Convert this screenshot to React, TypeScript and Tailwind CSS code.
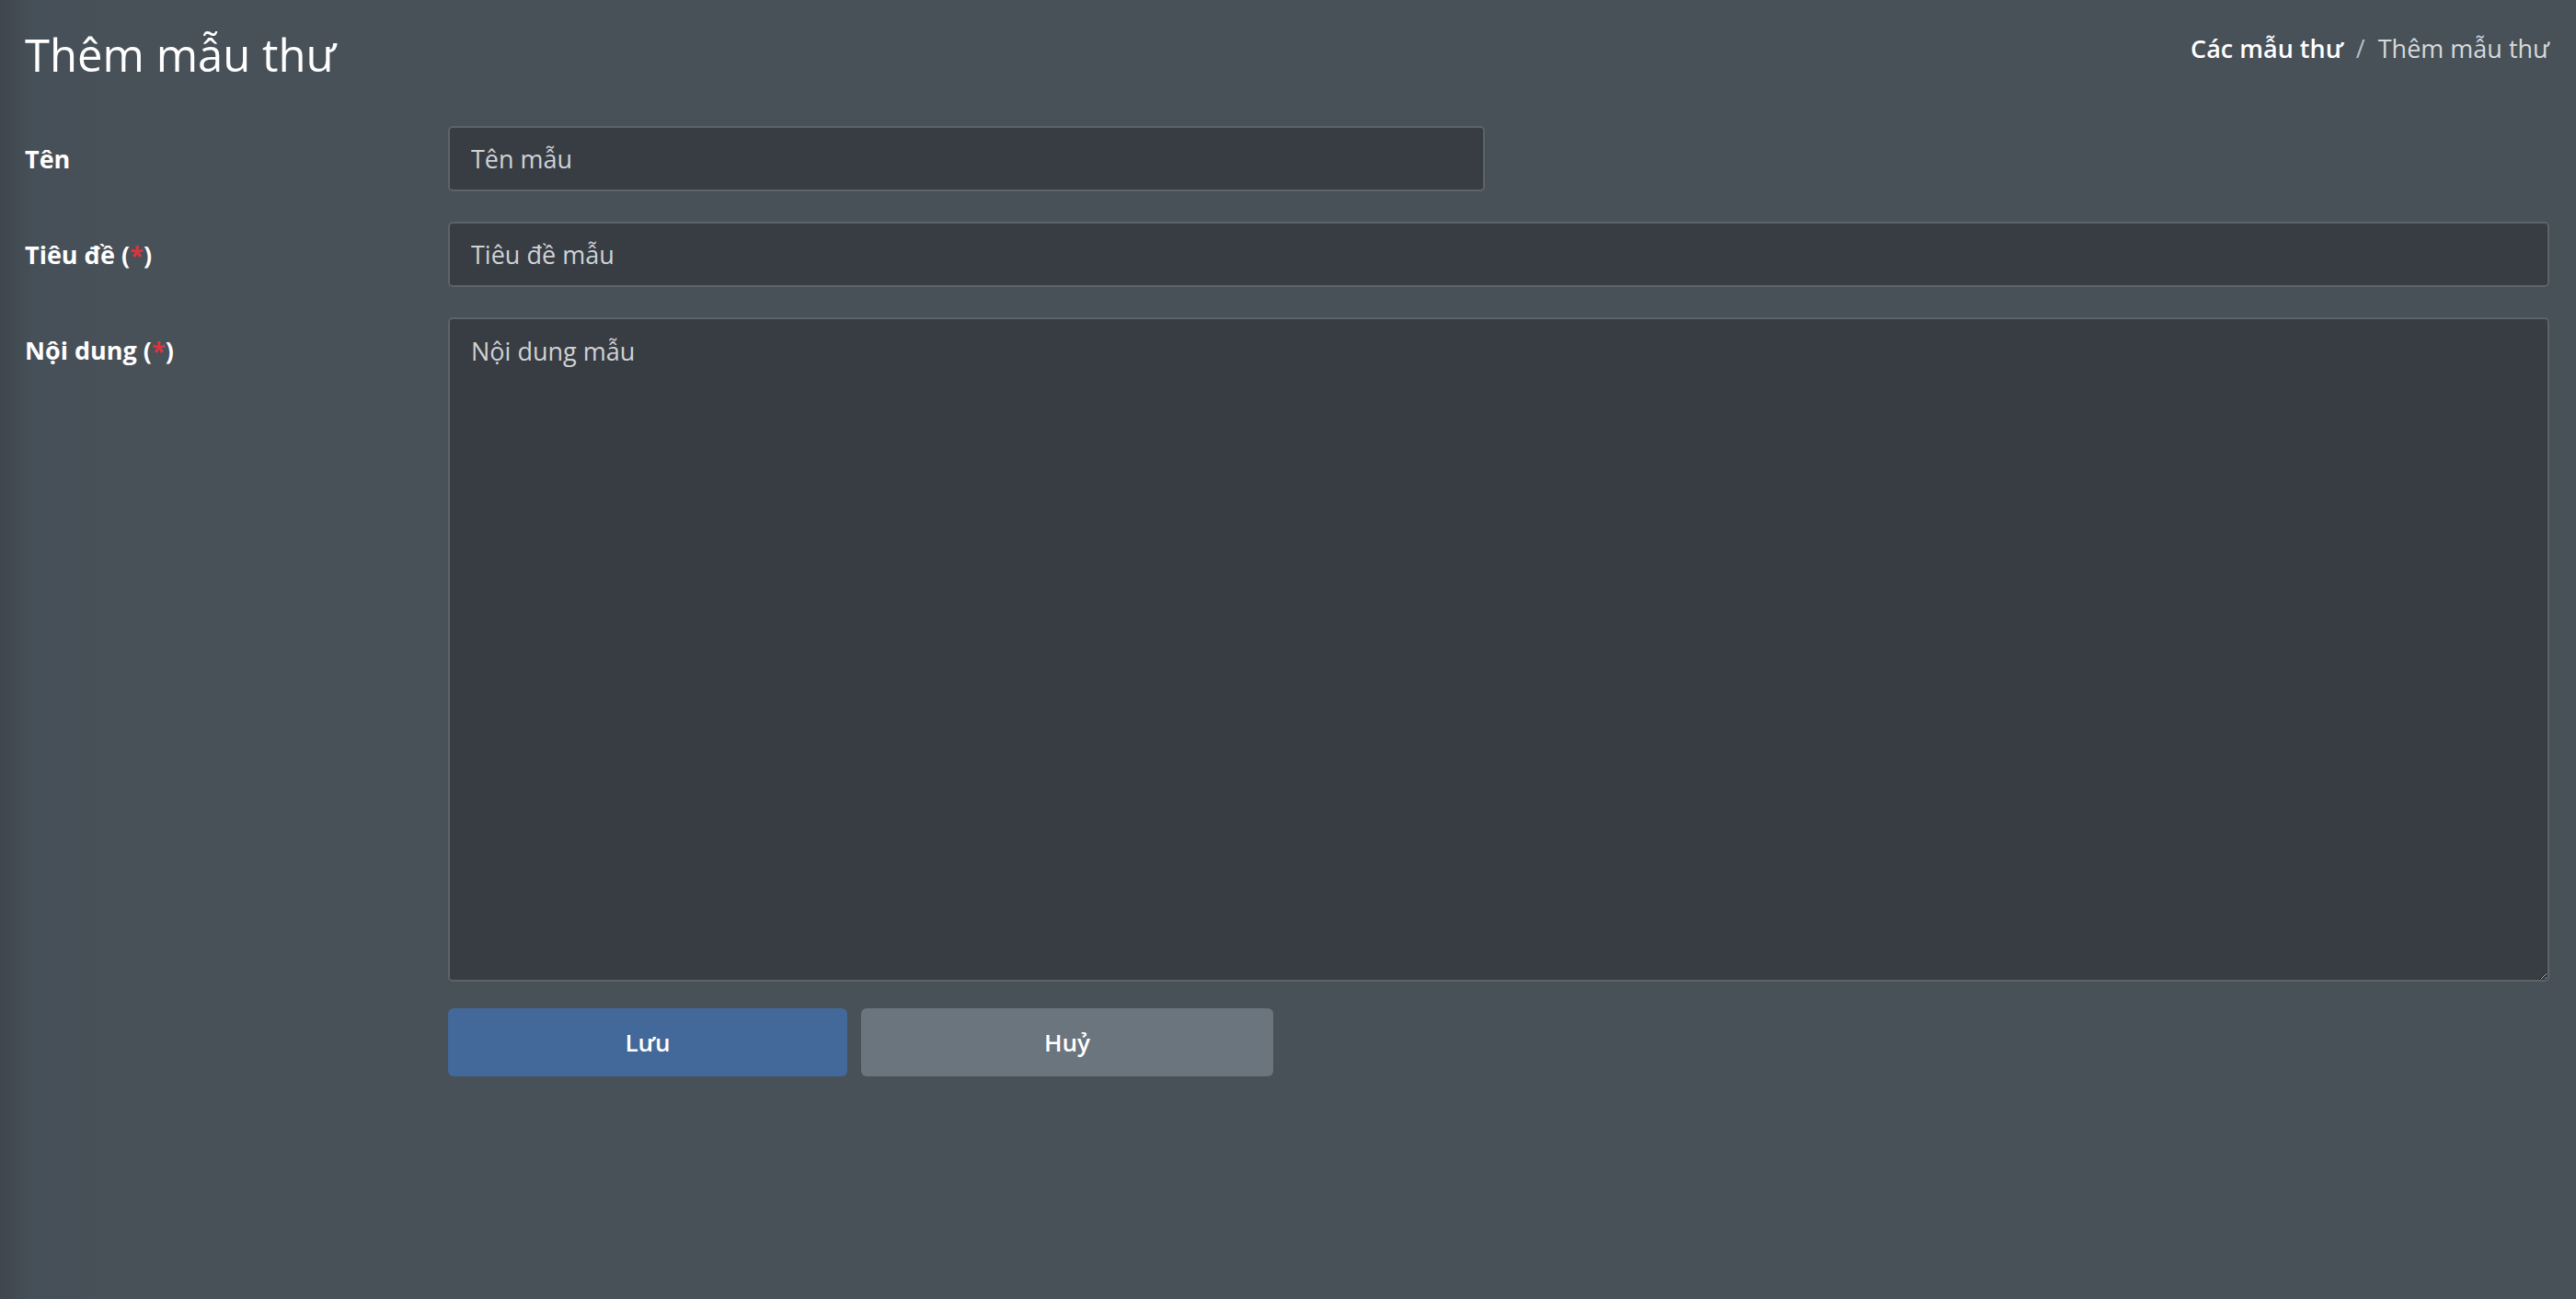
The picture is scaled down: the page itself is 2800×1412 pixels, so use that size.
import React from 'react'

const font = { fontFamily: '"Open Sans", "Noto Sans", Arial, sans-serif' }

function FieldLabel({ text, required }: { text: string; required?: boolean }) {
  return (
    <label className="block pt-[18px] text-[27px] font-bold leading-[36px] text-white">
      {text}
      {required && (
        <>
          {' ('}
          <span className="text-[#e0323c]">*</span>
          {')'}
        </>
      )}
    </label>
  )
}

const inputClass =
  'h-[71px] rounded-[5px] border-2 border-[#5c6369] bg-[#383c43] px-[23px] text-[27px] text-white outline-none placeholder:text-[#cfd2d5]'

export default function App() {
  return (
    <div
      style={font}
      className="min-h-screen w-full bg-[linear-gradient(90deg,#3f464d_0px,#465058_36px,#485058_120px,#485058_100%)] pl-[27px] pr-[29px]"
    >
      <div className="flex items-start justify-between">
        <h1 className="pt-[29px] text-[49px] font-normal leading-[60px] text-white">Thêm mẫu thư</h1>
        <nav className="flex items-center gap-[14px] pt-[34px] text-[27px] leading-[38px]">
          <span className="font-semibold text-white">Các mẫu thư</span>
          <span className="text-[#b9bec3]">/</span>
          <span className="text-[#d6d9dc]">Thêm mẫu thư</span>
        </nav>
      </div>

      <div className="mt-[48px] grid grid-cols-[460px_minmax(0,1fr)] gap-y-[33px]">
        <FieldLabel text="Tên" />
        <input placeholder="Tên mẫu" className={`${inputClass} w-[1127px]`} />

        <FieldLabel text="Tiêu đề" required />
        <input placeholder="Tiêu đề mẫu" className={`${inputClass} w-full`} />

        <FieldLabel text="Nội dung" required />
        <textarea
          placeholder="Nội dung mẫu"
          className="block h-[722px] w-full rounded-[5px] border-2 border-[#5c6369] bg-[#383c43] px-[23px] py-[16px] text-[27px] leading-[38px] text-white outline-none placeholder:text-[#cfd2d5]"
        />

        <div />
        <div className="-mt-[4px] flex gap-[15px]">
          <button className="h-[74px] w-[434px] rounded-[6px] bg-[#43699a] text-[26px] font-semibold text-white">
            Lưu
          </button>
          <button className="h-[74px] w-[448px] rounded-[6px] bg-[#6b757e] text-[26px] font-semibold text-white">
            Huỷ
          </button>
        </div>
      </div>
    </div>
  )
}
